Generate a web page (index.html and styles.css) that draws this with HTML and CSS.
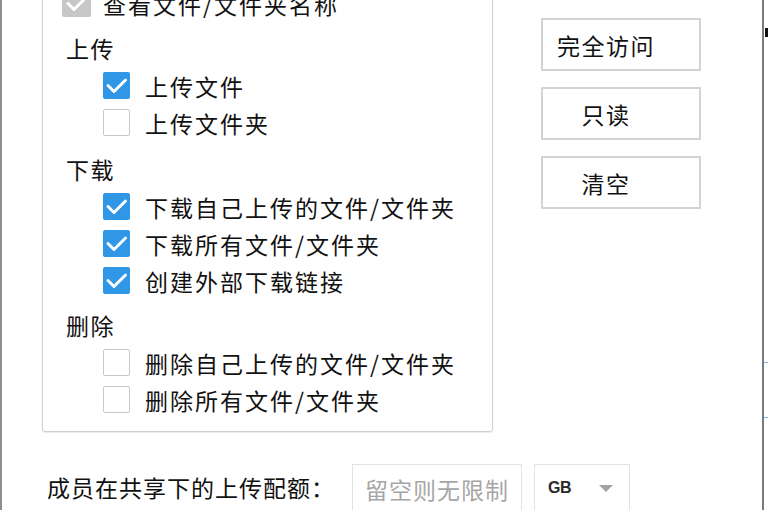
FILE: index.html
```html
<!DOCTYPE html>
<html lang="zh-CN">
<head>
<meta charset="utf-8">
<title>权限设置</title>
<link rel="stylesheet" href="styles.css">
</head>
<body>
<div class="page">
  <div class="window">
    <div class="main">
      <div class="group">
        <div class="row top">
          <span class="cb disabled"><svg viewBox="0 0 27 27"><polyline points="5,13.5 11,19.5 22.5,8"/></svg></span>
          <span class="lbl">查看文件/文件夹名称</span>
        </div>
        <div class="head first">上传</div>
        <div class="row sub">
          <span class="cb on"><svg viewBox="0 0 27 27"><polyline points="5,13.5 11,19.5 22.5,8"/></svg></span>
          <span class="lbl">上传文件</span>
        </div>
        <div class="row sub">
          <span class="cb"></span>
          <span class="lbl">上传文件夹</span>
        </div>
        <div class="head">下载</div>
        <div class="row sub">
          <span class="cb on"><svg viewBox="0 0 27 27"><polyline points="5,13.5 11,19.5 22.5,8"/></svg></span>
          <span class="lbl">下载自己上传的文件/文件夹</span>
        </div>
        <div class="row sub">
          <span class="cb on"><svg viewBox="0 0 27 27"><polyline points="5,13.5 11,19.5 22.5,8"/></svg></span>
          <span class="lbl">下载所有文件/文件夹</span>
        </div>
        <div class="row sub">
          <span class="cb on"><svg viewBox="0 0 27 27"><polyline points="5,13.5 11,19.5 22.5,8"/></svg></span>
          <span class="lbl">创建外部下载链接</span>
        </div>
        <div class="head last">删除</div>
        <div class="row sub">
          <span class="cb"></span>
          <span class="lbl">删除自己上传的文件/文件夹</span>
        </div>
        <div class="row sub">
          <span class="cb"></span>
          <span class="lbl">删除所有文件/文件夹</span>
        </div>
      </div>
      <div class="actions">
        <button class="btn">完全访问</button>
        <button class="btn">只读</button>
        <button class="btn">清空</button>
      </div>
    </div>
    <div class="quota">
      <span class="qlabel">成员在共享下的上传配额：</span>
      <span class="qinput">留空则无限制</span>
      <span class="qselect"><span class="unit">GB</span><span class="arrow"></span></span>
    </div>
  </div>
  <div class="side">
    <span class="mark"></span>
    <span class="blue"></span>
  </div>
</div>
</body>
</html>
```
FILE: styles.css
```css
html, body {
  margin: 0;
  padding: 0;
  background: #ffffff;
}
body {
  width: 768px;
  height: 510px;
  overflow: hidden;
  font-family: "Noto Sans CJK SC", "Noto Sans", sans-serif;
  color: #111111;
}
.page {
  display: flex;
  width: 768px;
  height: 510px;
}
.window {
  width: 760px;
  height: 510px;
  border-left: 2px solid #8e8e8e;
  border-right: 2px solid #7a7a7a;
  flex: none;
}
.side {
  flex: 1;
  position: relative;
}
.mark {
  position: absolute;
  left: 1px;
  top: 28px;
  width: 3px;
  height: 9px;
  background: #111;
}
.blue {
  position: absolute;
  left: 0;
  top: 362px;
  width: 4px;
  height: 54px;
  border-top: 1px solid #7fb4e6;
  border-bottom: 1px solid #7fb4e6;
}
.main {
  display: flex;
  align-items: flex-start;
  padding-left: 40px;
}
.group {
  width: 449px;
  margin-top: -30px;
  padding: 17px 0 13px;
  border: 1px solid #cfcfcf;
  border-radius: 3px;
  box-shadow: 0 1px 1px rgba(0, 0, 0, 0.08);
}
.row {
  display: flex;
  align-items: center;
  height: 37px;
  gap: 15px;
}
.row.top {
  padding-left: 19px;
  gap: 12px;
  margin-top: -3px;
}
.row.sub {
  padding-left: 60px;
}
.head {
  height: 37px;
  line-height: 37px;
  padding-left: 23px;
  margin-top: 10px;
  font-size: 23px;
  letter-spacing: 1.5px;
}
.head.first {
  margin-top: 8px;
}
.head.last {
  margin-top: 8px;
}
.lbl {
  font-size: 23px;
  letter-spacing: 2px;
  white-space: nowrap;
}
.cb {
  width: 27px;
  height: 27px;
  box-sizing: border-box;
  border: 1.5px solid #c8c8c8;
  border-radius: 2px;
  background: #fff;
  flex: none;
  display: block;
}
.cb svg {
  display: block;
  width: 100%;
  height: 100%;
}
.cb polyline {
  fill: none;
  stroke: #ffffff;
  stroke-width: 3;
  stroke-linecap: round;
  stroke-linejoin: round;
}
.cb.on {
  background: #3097e6;
  border: none;
}
.cb.disabled {
  background: #c7c7c7;
  border: none;
  width: 29px;
}
.actions {
  display: flex;
  flex-direction: column;
  gap: 16px;
  margin-top: 18px;
  margin-left: 48px;
}
.btn {
  width: 160px;
  height: 53px;
  box-sizing: border-box;
  border: 2px solid #d3d3d3;
  background: #fff;
  border-radius: 1px;
  font-family: "Noto Sans CJK SC", "Noto Sans", sans-serif;
  font-size: 23px;
  letter-spacing: 1.5px;
  color: #111111;
  padding: 0 30px 0 0;
  display: flex;
  align-items: center;
  justify-content: center;
}
.quota {
  display: flex;
  align-items: flex-start;
  margin-top: 32px;
  padding-left: 45px;
}
.qlabel {
  width: 305px;
  height: 48px;
  line-height: 46px;
  font-size: 23px;
  letter-spacing: 1px;
  white-space: nowrap;
}
.qinput {
  width: 170px;
  height: 52px;
  box-sizing: border-box;
  border: 1px solid #e2e2e2;
  padding-left: 12px;
  line-height: 48px;
  font-size: 23px;
  letter-spacing: 1px;
  color: #a6a6a6;
  white-space: nowrap;
  overflow: hidden;
}
.qselect {
  width: 96px;
  height: 52px;
  box-sizing: border-box;
  margin-left: 12px;
  border: 1px solid #e2e2e2;
  display: flex;
  align-items: center;
  padding: 0 0 4px 13px;
}
.unit {
  font-family: "Liberation Sans", Arial, sans-serif;
  font-size: 16px;
  font-weight: bold;
  color: #2a2a2a;
  letter-spacing: -0.5px;
}
.arrow {
  width: 0;
  height: 0;
  margin-left: 28px;
  border-left: 7px solid transparent;
  border-right: 7px solid transparent;
  border-top: 7px solid #a3a3a3;
}
```
